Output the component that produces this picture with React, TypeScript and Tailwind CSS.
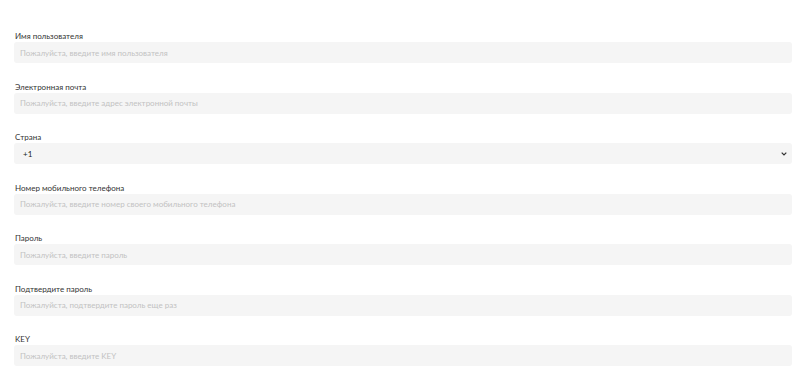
import React from "react";

const fields: { label: string; placeholder?: string; select?: boolean }[] = [
  { label: "Имя пользователя", placeholder: "Пожалуйста, введите имя пользователя" },
  { label: "Электронная почта", placeholder: "Пожалуйста, введите адрес электронной почты" },
  { label: "Страна", select: true },
  { label: "Номер мобильного телефона", placeholder: "Пожалуйста, введите номер своего мобильного телефона" },
  { label: "Пароль", placeholder: "Пожалуйста, введите пароль" },
  { label: "Подтвердите пароль", placeholder: "Пожалуйста, подтвердите пароль еще раз" },
  { label: "KEY", placeholder: "Пожалуйста, введите KEY" },
];

export default function App() {
  return (
    <div
      className="w-[803px] h-[382px] bg-white pl-[14px] pr-[11px] pt-[30px] flex flex-col gap-[17.5px]"
      style={{ fontFamily: 'Lato, "Open Sans", sans-serif' }}
    >
      {fields.map((f) => (
        <div key={f.label} className="flex flex-col">
          <label className="h-[12px] pl-px text-[8px] leading-[12px] text-[#333]">{f.label}</label>
          {f.select ? (
            <div className="relative h-[21px] rounded-[3px] bg-[#f5f5f5] flex items-center pl-[9px] text-[8px] text-[#222]">
              <span>+1</span>
              <svg
                className="absolute right-[5px] top-[9px]"
                width="6"
                height="4"
                viewBox="0 0 6 4"
                fill="none"
              >
                <path d="M0.7 0.7 L3 3 L5.3 0.7" stroke="#333" strokeWidth="1.2" />
              </svg>
            </div>
          ) : (
            <input
              className="h-[21px] rounded-[3px] bg-[#f5f5f5] px-[6px] text-[8px] text-[#333] outline-none placeholder:text-[#c2c2c2]"
              placeholder={f.placeholder}
            />
          )}
        </div>
      ))}
    </div>
  );
}
